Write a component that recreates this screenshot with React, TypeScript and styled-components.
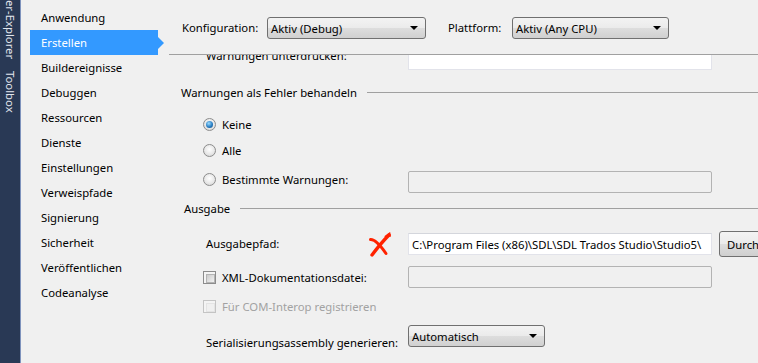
import React from 'react';
import styled, { createGlobalStyle, css } from 'styled-components';

const GlobalStyle = createGlobalStyle`
  html, body { margin: 0; padding: 0; background: #f0f0f0; }
  body {
    font-family: "Segoe UI", "Noto Sans", "Open Sans", sans-serif;
    font-size: 11.3px;
    color: #000;
  }
  * { box-sizing: border-box; }
`;

const Window = styled.div`
  display: flex;
  width: 758px;
  height: 363px;
  overflow: hidden;
  background: #f0f0f0;
`;

// linke Werkzeugleiste (Projektmappen-Explorer / Toolbox)
const ToolStrip = styled.div`
  width: 21px;
  flex: none;
  background: #293955;
  border-right: 1px solid #7f93bd;
  display: flex;
  flex-direction: column;
  align-items: center;
  gap: 12px;
  overflow: hidden;
`;

const ToolTab = styled.span`
  writing-mode: vertical-rl;
  color: #e2e6ee;
  font-size: 11.3px;
  line-height: 18px;
  white-space: nowrap;
`;

const Nav = styled.nav`
  width: 148px;
  flex: none;
  padding: 5px 0 0 9px;
  display: flex;
  flex-direction: column;
`;

const NavItem = styled.div<{ $active?: boolean }>`
  position: relative;
  width: 128px;
  height: 25px;
  padding-left: 11px;
  display: flex;
  align-items: center;
  color: #000;
  ${(p) =>
    p.$active &&
    css`
      background: #3399ff;
      color: #fff;
      &::after {
        content: '';
        position: absolute;
        right: -6px;
        top: 50%;
        margin-top: -6px;
        border-left: 6px solid #3399ff;
        border-top: 6px solid transparent;
        border-bottom: 6px solid transparent;
      }
    `}
`;

const Main = styled.div`
  flex: 1;
  min-width: 0;
  display: flex;
  flex-direction: column;
`;

const TopBar = styled.div`
  height: 55px;
  flex: none;
  padding: 17px 0 0 13px;
  display: flex;
  align-items: flex-start;
  border-bottom: 1px solid #a0a0a0;
`;

const BarLabel = styled.span<{ $width: number }>`
  width: ${(p) => p.$width}px;
  height: 22px;
  line-height: 22px;
  white-space: nowrap;
`;

const Combo = styled.div<{ $width: number }>`
  width: ${(p) => p.$width}px;
  height: 22px;
  flex: none;
  border: 1px solid #707070;
  border-radius: 3px;
  background: linear-gradient(#f3f3f3 0%, #ebebeb 48%, #dddddd 52%, #d0d0d0 100%);
  padding: 0 7px 0 3px;
  display: flex;
  align-items: center;
  justify-content: space-between;
  white-space: nowrap;
  &::after {
    content: '';
    border-top: 4px solid #000;
    border-left: 4px solid transparent;
    border-right: 4px solid transparent;
  }
`;

const Scroll = styled.div`
  flex: 1;
  overflow: hidden;
`;

// Inhalt ist bereits etwas nach unten gescrollt
const Content = styled.div`
  margin-top: -7px;
  display: flex;
  flex-direction: column;
`;

const Row = styled.div<{ $top: number; $height: number; $align?: string }>`
  display: grid;
  grid-template-columns: 239px 304px auto;
  align-items: ${(p) => p.$align || 'center'};
  height: ${(p) => p.$height}px;
  margin-top: ${(p) => p.$top}px;
`;

const FieldLabel = styled.div<{ $pad?: number }>`
  padding-left: 37px;
  padding-top: ${(p) => p.$pad || 0}px;
  line-height: 16px;
  white-space: nowrap;
  display: flex;
  align-items: center;
`;

const Section = styled.div<{ $top: number; $indent: number }>`
  display: flex;
  align-items: center;
  gap: 10px;
  height: 16px;
  margin-top: ${(p) => p.$top}px;
  padding-left: ${(p) => p.$indent}px;
  white-space: nowrap;
  &::after {
    content: '';
    flex: 1;
    border-top: 1px solid #a0a0a0;
  }
`;

const Option = styled.label<{ $disabled?: boolean }>`
  display: flex;
  align-items: center;
  gap: 6px;
  padding-left: 34px;
  height: 16px;
  white-space: nowrap;
  color: ${(p) => (p.$disabled ? '#a2a2a2' : '#000')};
`;

const Radio = styled.span<{ $checked?: boolean }>`
  width: 13px;
  height: 13px;
  flex: none;
  border-radius: 50%;
  border: 1px solid #8c8c8c;
  background: radial-gradient(circle at 50% 40%, #ffffff 0%, #e8e8e8 55%, #cfcfcf 100%);
  display: flex;
  align-items: center;
  justify-content: center;
  &::after {
    content: '';
    display: ${(p) => (p.$checked ? 'block' : 'none')};
    width: 7px;
    height: 7px;
    border-radius: 50%;
    background: radial-gradient(circle at 40% 35%, #9cdcff 0%, #2a7fc4 55%, #0c4377 100%);
  }
`;

const Check = styled.span<{ $disabled?: boolean }>`
  width: 13px;
  height: 13px;
  flex: none;
  border: 1px solid ${(p) => (p.$disabled ? '#c4c4c4' : '#8c8c8c')};
  background: #f4f4f4;
  padding: 2px;
  &::after {
    content: '';
    display: block;
    width: 100%;
    height: 100%;
    background: ${(p) =>
      p.$disabled ? '#f0f0f0' : 'linear-gradient(135deg, #cbcbcb, #f2f2f2)'};
    border: 1px solid ${(p) => (p.$disabled ? '#e4e4e4' : '#b4b4b4')};
  }
`;

const TextBox = styled.div<{ $disabled?: boolean }>`
  height: 22px;
  width: 304px;
  padding: 0 3px;
  display: flex;
  align-items: center;
  white-space: nowrap;
  overflow: hidden;
  ${(p) =>
    p.$disabled
      ? css`
          background: #f0f0f0;
          border: 1px solid #b3b3b3;
          border-radius: 2px;
        `
      : css`
          background: #fff;
          border: 1px solid #e2e3ea;
          border-top-color: #d4d6dc;
        `}
`;

const Button = styled.div`
  margin-left: 7px;
  width: 80px;
  height: 26px;
  border: 1px solid #707070;
  border-radius: 3px;
  background: linear-gradient(#f3f3f3 0%, #ebebeb 48%, #dddddd 52%, #cfcfcf 100%);
  padding-left: 7px;
  display: flex;
  align-items: center;
  white-space: nowrap;
  overflow: hidden;
`;

const PathLabel = styled(FieldLabel)`
  justify-content: space-between;
  padding-right: 16px;
`;

const RedCross = () => (
  <svg width="24" height="25" viewBox="0 0 24 25">
    <g fill="none" stroke="#ff2200" strokeLinecap="round">
      <path d="M21 3 Q13 11 4 23" strokeWidth="3.4" />
      <path d="M2.5 7.5 Q8 7 18 21.5" strokeWidth="3" />
      <path d="M17.5 4.5 L21.5 1.5 L22 4" strokeWidth="1.8" />
    </g>
  </svg>
);

const navItems = [
  'Anwendung',
  'Erstellen',
  'Buildereignisse',
  'Debuggen',
  'Ressourcen',
  'Dienste',
  'Einstellungen',
  'Verweispfade',
  'Signierung',
  'Sicherheit',
  'Veröffentlichen',
  'Codeanalyse',
];

export default function App() {
  return (
    <>
      <GlobalStyle />
      <Window>
        <ToolStrip>
          <ToolTab>er-Explorer</ToolTab>
          <ToolTab>Toolbox</ToolTab>
        </ToolStrip>

        <Nav>
          {navItems.map((n) => (
            <NavItem key={n} $active={n === 'Erstellen'}>
              {n}
            </NavItem>
          ))}
        </Nav>

        <Main>
          <TopBar>
            <BarLabel $width={85}>Konfiguration:</BarLabel>
            <Combo $width={159}>Aktiv (Debug)</Combo>
            <BarLabel $width={22} />
            <BarLabel $width={64}>Plattform:</BarLabel>
            <Combo $width={157}>Aktiv (Any CPU)</Combo>
          </TopBar>

          <Scroll>
            <Content>
              <Row $top={0} $height={22} $align="start">
                <FieldLabel>Warnungen unterdrücken:</FieldLabel>
                <TextBox />
              </Row>

              <Section $top={14} $indent={12}>
                Warnungen als Fehler behandeln
              </Section>

              <Row $top={14} $height={20}>
                <Option>
                  <Radio $checked />
                  Keine
                </Option>
              </Row>
              <Row $top={6} $height={20}>
                <Option>
                  <Radio />
                  Alle
                </Option>
              </Row>
              <Row $top={11} $height={22} $align="start">
                <Option>
                  <Radio />
                  Bestimmte Warnungen:
                </Option>
                <TextBox $disabled />
              </Row>

              <Section $top={7} $indent={15}>
                Ausgabe
              </Section>

              <Row $top={15} $height={26}>
                <PathLabel>
                  Ausgabepfad:
                  <RedCross />
                </PathLabel>
                <TextBox>C:\Program Files (x86)\SDL\SDL Trados Studio\Studio5\</TextBox>
                <Button>Durchsuchen...</Button>
              </Row>

              <Row $top={9} $height={22}>
                <Option>
                  <Check />
                  XML-Dokumentationsdatei:
                </Option>
                <TextBox $disabled />
              </Row>

              <Row $top={10} $height={16}>
                <Option $disabled>
                  <Check $disabled />
                  Für COM-Interop registrieren
                </Option>
              </Row>

              <Row $top={11} $height={22} $align="start">
                <FieldLabel $pad={10}>Serialisierungsassembly generieren:</FieldLabel>
                <Combo $width={137}>Automatisch</Combo>
              </Row>
            </Content>
          </Scroll>
        </Main>
      </Window>
    </>
  );
}
